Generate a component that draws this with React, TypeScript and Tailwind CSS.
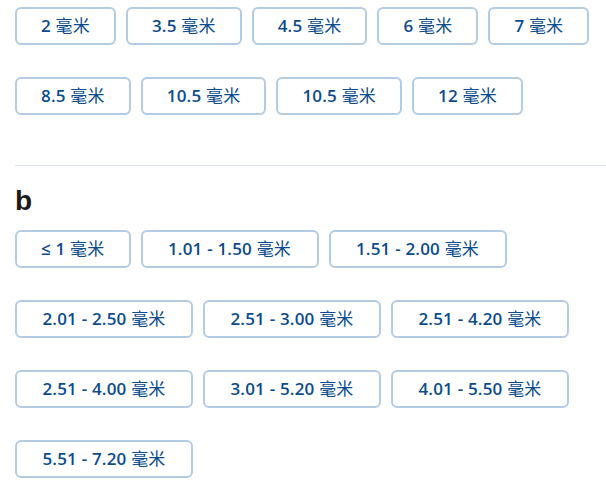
import React from 'react'

const sizes = ['2', '3.5', '4.5', '6', '7', '8.5', '10.5', '10.5', '12']

const ranges = [
  '≤ 1',
  '1.01 - 1.50',
  '1.51 - 2.00',
  '2.01 - 2.50',
  '2.51 - 3.00',
  '2.51 - 4.20',
  '2.51 - 4.00',
  '3.01 - 5.20',
  '4.01 - 5.50',
  '5.51 - 7.20',
]

const Chip = ({ label, wide }: { label: string; wide?: boolean }) => (
  <button
    className={`h-[38px] rounded-md border-2 border-[#b4cce3] bg-white px-6 text-[17px] font-semibold tracking-[0.2px] text-[#0c4c8c] ${wide ? 'min-w-[178px]' : ''}`}
  >
    {label} <span className='font-normal'>毫米</span>
  </button>
)

const App = () => {
  return (
    <div
      className='bg-white min-h-screen pl-[15px] pt-[7px]'
      style={{ fontFamily: '"Open Sans", "Noto Sans CJK SC", sans-serif' }}
    >
      <div className='flex flex-wrap gap-x-[10px] gap-y-[32px] pr-[15px]'>
        {sizes.map((s, i) => (
          <Chip key={i} label={s} />
        ))}
      </div>
      <hr className='mt-[50px] border-t border-[#dde3ea]' />
      <h2 className='mt-[17px] text-[28px] font-bold leading-[36px] text-[#1a1a1a]' style={{ fontFamily: '"Liberation Sans", sans-serif' }}>
        b
      </h2>
      <div className='mt-[11px] flex flex-wrap gap-x-[10px] gap-y-[32px] pr-[30px]'>
        {ranges.map((s, i) => (
          <Chip key={i} label={s} wide={i > 0} />
        ))}
      </div>
    </div>
  )
}

export default App
